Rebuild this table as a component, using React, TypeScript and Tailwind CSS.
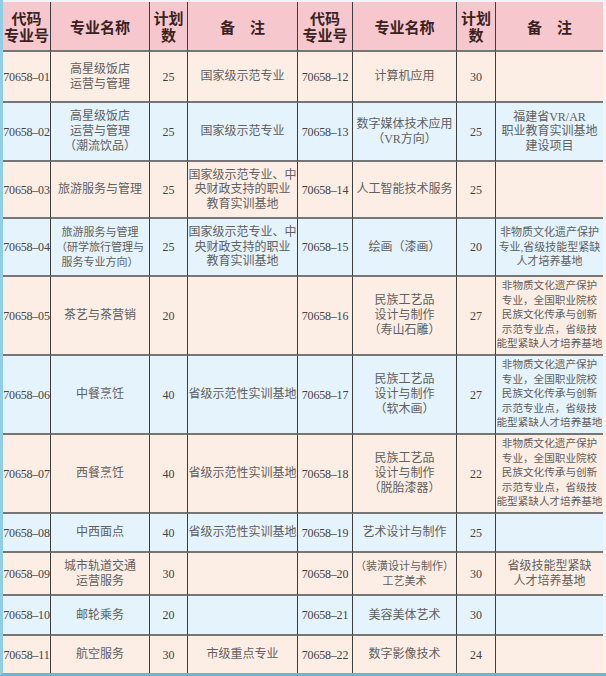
import clsx from "clsx";

type Item = {
  code: string;
  name: string;
  n: string;
  note: string;
  nameCls?: string;
  noteCls?: string;
};

const LONG_NOTE =
  "非物质文化遗产保护\n专业，全国职业院校\n民族文化传承与创新\n示范专业点，省级技\n能型紧缺人才培养基地";

const left: Item[] = [
  { code: "70658–01", name: "高星级饭店\n运营与管理", n: "25", note: "国家级示范专业" },
  { code: "70658–02", name: "高星级饭店\n运营与管理\n（潮流饮品）", n: "25", note: "国家级示范专业" },
  { code: "70658–03", name: "旅游服务与管理", n: "25", note: "国家级示范专业、中\n央财政支持的职业\n教育实训基地" },
  {
    code: "70658–04",
    name: "旅游服务与管理\n（研学旅行管理与\n服务专业方向）",
    n: "25",
    note: "国家级示范专业、中\n央财政支持的职业\n教育实训基地",
    nameCls: "text-[11px]",
  },
  { code: "70658–05", name: "茶艺与茶营销", n: "20", note: "" },
  { code: "70658–06", name: "中餐烹饪", n: "40", note: "省级示范性实训基地" },
  { code: "70658–07", name: "西餐烹饪", n: "40", note: "省级示范性实训基地" },
  { code: "70658–08", name: "中西面点", n: "40", note: "省级示范性实训基地" },
  { code: "70658–09", name: "城市轨道交通\n运营服务", n: "30", note: "" },
  { code: "70658–10", name: "邮轮乘务", n: "20", note: "" },
  { code: "70658–11", name: "航空服务", n: "30", note: "市级重点专业" },
];

const right: Item[] = [
  { code: "70658–12", name: "计算机应用", n: "30", note: "" },
  { code: "70658–13", name: "数字媒体技术应用\n（VR方向）", n: "25", note: "福建省VR/AR\n职业教育实训基地\n建设项目" },
  { code: "70658–14", name: "人工智能技术服务", n: "25", note: "" },
  {
    code: "70658–15",
    name: "绘画（漆画）",
    n: "20",
    note: "非物质文化遗产保护\n专业,省级技能型紧缺\n人才培养基地",
    noteCls: "text-[11px]",
  },
  { code: "70658–16", name: "民族工艺品\n设计与制作\n（寿山石雕）", n: "27", note: LONG_NOTE, noteCls: "text-[10.6px]" },
  { code: "70658–17", name: "民族工艺品\n设计与制作\n（软木画）", n: "27", note: LONG_NOTE, noteCls: "text-[10.6px]" },
  { code: "70658–18", name: "民族工艺品\n设计与制作\n（脱胎漆器）", n: "22", note: LONG_NOTE, noteCls: "text-[10.6px]" },
  { code: "70658–19", name: "艺术设计与制作", n: "25", note: "" },
  {
    code: "70658–20",
    name: "（装潢设计与制作）\n工艺美术",
    n: "30",
    note: "省级技能型紧缺\n人才培养基地",
    nameCls: "text-[11px]",
  },
  { code: "70658–21", name: "美容美体艺术", n: "30", note: "" },
  { code: "70658–22", name: "数字影像技术", n: "24", note: "" },
];

const headers = ["代码\n专业号", "专业名称", "计划\n数", "备　注"];

function Cell({
  children,
  last,
  bottom,
  className,
}: {
  children?: React.ReactNode;
  last?: boolean;
  bottom?: boolean;
  className?: string;
}) {
  return (
    <div
      className={clsx(
        "flex items-center justify-center text-center whitespace-pre overflow-visible",
        !last && "border-r border-r-[#3d3d3d]",
        !bottom && "border-b-2 border-b-[#767676]",
        className
      )}
    >
      {children}
    </div>
  );
}

export default function App() {
  return (
    <div className="w-[606px] h-[676px] bg-[#edf6f9] border-l-[3px] border-l-[#93cde1] border-b-[3px] border-b-[#6cb5cf] pt-[2px] pr-[3px] font-['Liberation_Serif','Noto_Sans_CJK_SC',serif]">
      <div className="grid grid-cols-[48px_99px_38px_110px_55px_104px_39px_107px] grid-rows-[50px_51px_59px_57px_58px_79px_79px_79px_39px_43px_40px_37px]">
        {[0, 1].map((side) =>
          headers.map((h, j) => (
            <Cell
              key={`h${side}${j}`}
              last={side === 1 && j === 3}
              className="bg-[#f6c8ce] text-[15px] leading-[17px] font-bold text-[#3a2222] font-['Noto_Sans_CJK_SC',sans-serif]"
            >
              {h}
            </Cell>
          ))
        )}
        {left.map((l, i) => {
          const bg = i % 2 === 0 ? "bg-[#fdeee5]" : "bg-[#e5f3fc]";
          const bottom = i === left.length - 1;
          const r = right[i];
          return [l, r].map((it, s) => (
            <div key={`${i}-${s}`} className="contents">
              <Cell bottom={bottom} className={clsx(bg, "text-[12px] tracking-[-0.2px] text-[#444]")}>
                {it.code}
              </Cell>
              <Cell bottom={bottom} className={clsx(bg, "leading-[15px] text-[#606060]", it.nameCls ?? "text-[12px]")}>
                {it.name}
              </Cell>
              <Cell bottom={bottom} className={clsx(bg, "text-[12px] text-[#444]")}>
                {it.n}
              </Cell>
              <Cell
                bottom={bottom}
                last={s === 1}
                className={clsx(bg, "leading-[14.5px] text-[#606060]", it.noteCls ?? "text-[12px]")}
              >
                {it.note}
              </Cell>
            </div>
          ));
        })}
      </div>
    </div>
  );
}
